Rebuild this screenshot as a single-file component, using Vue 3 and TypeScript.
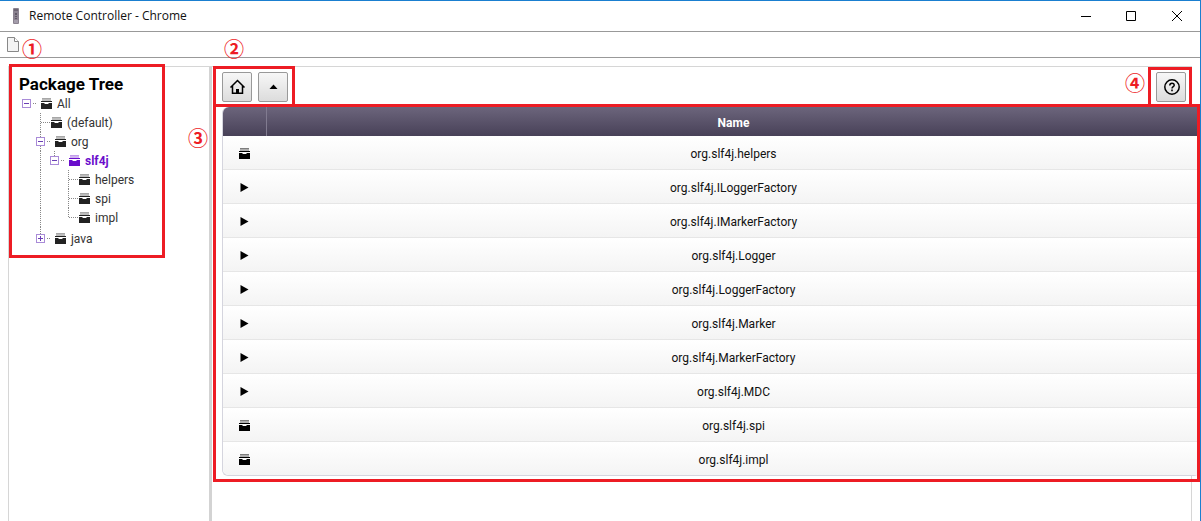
<script setup lang="ts">
type Cell = 'blank' | 'line' | 'tee' | 'end' | 'minus' | 'minus-mid' | 'minus-end' | 'plus-end'

interface TreeNode {
  label: string
  cells: Cell[]
  selected?: boolean
}

interface Entry {
  name: string
  kind: 'package' | 'class'
}

const nodes: TreeNode[] = [
  { label: 'All', cells: ['minus'] },
  { label: '(default)', cells: ['blank', 'tee'] },
  { label: 'org', cells: ['blank', 'minus-mid'] },
  { label: 'slf4j', cells: ['blank', 'line', 'minus-end'], selected: true },
  { label: 'helpers', cells: ['blank', 'line', 'blank', 'tee'] },
  { label: 'spi', cells: ['blank', 'line', 'blank', 'tee'] },
  { label: 'impl', cells: ['blank', 'line', 'blank', 'end'] },
  { label: 'java', cells: ['blank', 'plus-end'] },
]

const entries: Entry[] = [
  { name: 'org.slf4j.helpers', kind: 'package' },
  { name: 'org.slf4j.ILoggerFactory', kind: 'class' },
  { name: 'org.slf4j.IMarkerFactory', kind: 'class' },
  { name: 'org.slf4j.Logger', kind: 'class' },
  { name: 'org.slf4j.LoggerFactory', kind: 'class' },
  { name: 'org.slf4j.Marker', kind: 'class' },
  { name: 'org.slf4j.MarkerFactory', kind: 'class' },
  { name: 'org.slf4j.MDC', kind: 'class' },
  { name: 'org.slf4j.spi', kind: 'package' },
  { name: 'org.slf4j.impl', kind: 'package' },
]

const isToggle = (cell: Cell): boolean => cell.startsWith('minus') || cell.startsWith('plus')
const isBranch = (node: TreeNode): boolean => node.cells.some(isToggle)
</script>

<template>
  <div class="window">
    <header class="titlebar">
      <svg class="app-icon" viewBox="0 0 6 16" aria-hidden="true">
        <rect width="6" height="16" rx="1" fill="#8b8390" />
        <path d="M1 1h4v2H1z" fill="#6d6573" />
        <path d="M2 5h2v2H2zM2 8h2v1H2zM2 10h2v1H2z" fill="#5f5866" />
        <path d="M1 12h4v3H1z" fill="#a49dab" />
      </svg>
      <span class="title">Remote Controller - Chrome</span>
      <button class="win-btn" type="button" aria-label="Minimize">
        <svg viewBox="0 0 11 11"><path d="M1 5.500h10" /></svg>
      </button>
      <button class="win-btn" type="button" aria-label="Maximize">
        <svg viewBox="0 0 11 11"><path d="M.5 .5h9v9h-9z" /></svg>
      </button>
      <button class="win-btn" type="button" aria-label="Close">
        <svg viewBox="0 0 11 11"><path d="M0 0l10 10M10 0L0 10" /></svg>
      </button>
    </header>

    <div class="addressbar">
      <svg class="page-icon" viewBox="0 0 12 15" aria-hidden="true">
        <path d="M.5 .5h7l4 4v10H.5z" fill="#f4f4f4" stroke="#888" />
        <path d="M7.500 .5v4h4" fill="#fff" stroke="#888" />
      </svg>
    </div>

    <main class="panes">
      <aside class="sidebar">
        <section class="tree">
          <h1>Package Tree</h1>
          <ul>
            <li v-for="node in nodes" :key="node.label" :class="{ selected: node.selected, last: node.label === 'java' }">
              <span v-for="(cell, i) in node.cells" :key="i" class="cell" :class="cell">
                <button v-if="isToggle(cell)" class="toggle" type="button" :aria-label="'Toggle ' + node.label">
                  <svg viewBox="0 0 9 9">
                    <path d="M2 4.500h5" />
                    <path v-if="cell === 'plus-end'" d="M4.500 2v5" />
                  </svg>
                </button>
              </span>
              <span class="tail" :class="{ branch: isBranch(node) }"></span>
              <svg class="package" viewBox="0 0 11 11" aria-hidden="true">
                <path d="M1 0h9v1H1z" opacity=".4" />
                <path d="M1 1h9v2H1z" opacity=".3" />
                <path d="M0 3h11v1H0zM0 5h3l1 1h3l1-1h3v6H0z" />
              </svg>
              <span class="label">{{ node.label }}</span>
            </li>
          </ul>
          <div class="frame"></div>
          <span class="mark mark-1">①</span>
        </section>
      </aside>

      <section class="content">
        <div class="toolbar">
          <div class="group">
            <button class="tool" type="button" aria-label="Home">
              <svg viewBox="-1 0 16 16">
                <path d="M.5 8.500L7.500 1.500l7 7M2.500 7v7.200h10V7" fill="none" stroke="#000" stroke-width="1.500" />
                <path d="M6 10h3v4H6z" />
              </svg>
            </button>
            <button class="tool" type="button" aria-label="Up">
              <svg viewBox="-1 0 16 16"><path d="M3.500 10l4-4.500 4 4.500z" /></svg>
            </button>
            <div class="frame"></div>
            <span class="mark mark-2">②</span>
          </div>
          <div class="group help">
            <button class="tool" type="button" aria-label="Help">
              <svg viewBox="-1 0 16 16">
                <circle cx="8" cy="8" r="7.200" fill="none" stroke="#000" stroke-width="1.500" />
                <path d="M5.800 6.500C5.800 3.300 10.200 3.500 10.200 6.200 10.200 7.700 8 7.700 8 9.600" fill="none" stroke="#000" stroke-width="1.500" />
                <path d="M7.200 10.600h1.600v1.600H7.200z" />
              </svg>
            </button>
            <div class="frame"></div>
            <span class="mark mark-4">④</span>
          </div>
        </div>

        <div class="listing">
          <table>
            <thead>
              <tr>
                <th class="kind" scope="col" aria-label="Type"></th>
                <th scope="col">Name</th>
              </tr>
            </thead>
            <tbody>
              <tr v-for="entry in entries" :key="entry.name">
                <td class="kind">
                  <svg v-if="entry.kind === 'package'" viewBox="0 0 11 11" role="img" aria-label="Package">
                    <path d="M1 0h9v1H1z" opacity=".5" />
                    <path d="M1 1h9v2H1z" opacity=".3" />
                    <path d="M0 3h11v1H0zM0 5h3l1 1h3l1-1h3v6H0z" />
                  </svg>
                  <svg v-else viewBox="0 0 11 11" role="img" aria-label="Class">
                    <path d="M1.500 1l8 4.500-8 4.500z" />
                  </svg>
                </td>
                <td>{{ entry.name }}</td>
              </tr>
            </tbody>
          </table>
          <div class="frame"></div>
          <span class="mark mark-3">③</span>
        </div>
      </section>
    </main>
  </div>
</template>

<style>
body {
  background: #fff;
}
</style>

<style scoped>
.window {
  box-sizing: border-box;
  display: flex;
  flex-direction: column;
  min-height: 100vh;
  border-top: 1px solid #1a7fd0;
  border-right: 1px solid #1a7fd0;
  background: #fff;
  color: #333;
  font: 12px/18px Roboto, sans-serif;
}
button {
  display: flex;
  align-items: center;
  justify-content: center;
  padding: 0;
  border: 0;
  background: none;
}
svg {
  display: block;
  overflow: visible;
}
.titlebar {
  display: flex;
  align-items: center;
  height: 30px;
  padding-left: 13px;
  border-bottom: 1px solid #999;
}
.app-icon {
  width: 6px;
  height: 16px;
}
.title {
  flex: 1;
  margin-left: 10px;
  color: #111;
  font-family: "Open Sans", sans-serif;
}
.win-btn {
  width: 46px;
  height: 30px;
}
.win-btn svg {
  width: 11px;
  height: 11px;
  fill: none;
  stroke: #000;
}
.addressbar {
  display: flex;
  align-items: center;
  height: 25px;
  padding-left: 7px;
  border-bottom: 1px solid #999;
}
.page-icon {
  width: 12px;
  height: 15px;
}
.panes {
  display: flex;
  flex: 1;
  margin: 8px 8px 0;
  border: 1px solid #d6d6d6;
  border-bottom: 0;
}
.sidebar {
  flex: 0 0 200px;
  border-right: 3px solid #d3d3d3;
}
.tree {
  position: relative;
  width: 146px;
  padding: 7px 0 8px 10px;
}
h1 {
  margin: 0;
  color: #000;
  font-size: 17px;
  line-height: 20px;
}
ul {
  margin: 0;
  padding: 0;
  list-style: none;
}
li {
  display: flex;
  align-items: center;
  height: 19px;
}
li.last {
  height: 23px;
}
.cell {
  display: flex;
  align-self: stretch;
  align-items: center;
  justify-content: center;
  width: 14px;
  background-repeat: no-repeat;
}
.line,
.tee,
.end,
.minus-mid,
.minus-end,
.plus-end {
  background-image: repeating-linear-gradient(#888 0 1px, transparent 1px 2px);
  background-position: 7px 0;
  background-size: 1px 100%;
}
.end,
.minus-end,
.plus-end {
  background-size: 1px 50%;
}
.toggle {
  width: 9px;
  height: 9px;
  background: #fff;
}
.toggle svg {
  width: 9px;
  height: 9px;
  fill: none;
  stroke: #6b3fb5;
  outline: 1px solid #a98bd8;
  outline-offset: -1px;
}
.tail {
  width: 10px;
  height: 1px;
  margin: 0 0 0 -6px;
  background: repeating-linear-gradient(90deg, #888 0 1px, transparent 1px 2px);
}
.tail.branch {
  width: 3px;
  margin: 0 5px 0 0;
}
.package {
  width: 11px;
  height: 11px;
  fill: #222;
}
.label {
  margin-left: 5px;
}
.selected .package {
  fill: #6a0dcc;
}
.selected .label {
  color: #6a0dcc;
  font-weight: bold;
}
.content {
  flex: 1;
  min-width: 0;
  padding: 5px 5px 0 10px;
}
.toolbar {
  display: flex;
  justify-content: space-between;
}
.group {
  position: relative;
  display: flex;
  gap: 6px;
}
.tool {
  width: 30px;
  height: 30px;
  border: 1px solid #999;
  border-radius: 2px;
  background: linear-gradient(#f7f7f7, #dcdcdc);
}
.tool svg {
  width: 16px;
  height: 16px;
}
.listing {
  position: relative;
  margin: 5px -14px 0 0;
}
table {
  width: 100%;
  border: 1px solid #d5d5de;
  border-top: 0;
  border-right: 0;
  border-radius: 6px;
  border-spacing: 0;
  color: #111;
  text-align: center;
}
th {
  height: 27px;
  padding: 2px 0 0;
  background: linear-gradient(#6c657c, #484158);
  color: #fff;
}
th.kind {
  border-right: 1px solid #817b90;
  border-top-left-radius: 6px;
}
.kind {
  width: 43px;
}
td {
  height: 31px;
  padding: 2px 0 0;
  border-bottom: 1px solid #e6e6e6;
  background: linear-gradient(#fff, #f4f4f4);
}
td.kind {
  width: 41px;
  padding-right: 2px;
}
tr:last-child td {
  border-bottom: 0;
}
tr:last-child td.kind {
  border-bottom-left-radius: 6px;
}
td svg {
  width: 11px;
  height: 11px;
  margin: 0 auto;
}
.frame {
  position: absolute;
  z-index: 1;
  border: 3px solid #ed1c24;
  pointer-events: none;
}
.tree .frame {
  inset: -3px 0 0 0;
}
.group .frame {
  inset: -6px -7px -5px -9px;
}
.help .frame {
  inset: -5px -6px -5px -8px;
}
.listing .frame {
  inset: -3px 0 -6px -9px;
}
.mark {
  position: absolute;
  z-index: 2;
  color: #ed1c24;
  font: bold 20px/20px "Noto Sans CJK KR", sans-serif;
}
.mark-1 {
  top: -28px;
  left: 13px;
}
.mark-2 {
  top: -33px;
  left: 2px;
}
.mark-3 {
  top: 21px;
  left: -34px;
}
.mark-4 {
  top: 1px;
  left: -31px;
}
</style>
